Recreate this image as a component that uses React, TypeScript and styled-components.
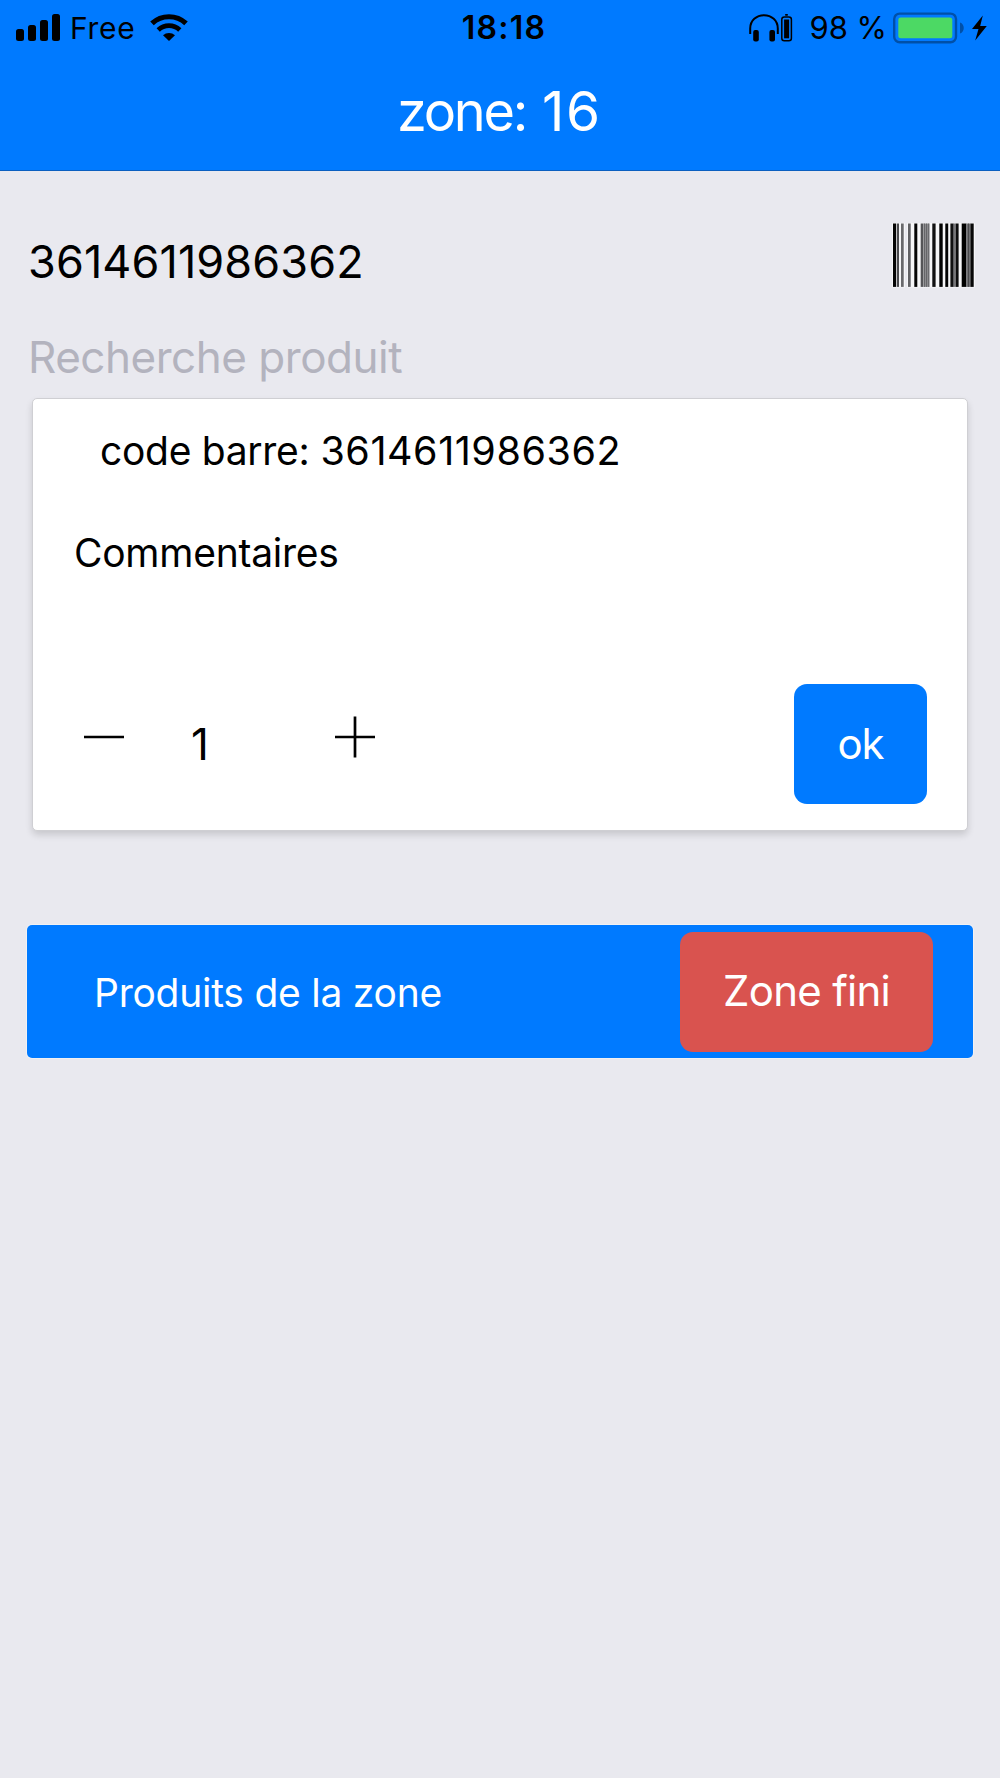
import React from "react";
import styled, { createGlobalStyle } from "styled-components";

const GlobalStyle = createGlobalStyle`
  *, *::before, *::after { box-sizing: border-box; }
  body {
    margin: 0;
    background: #e9e9ef;
    font-family: Inter, "Liberation Sans", sans-serif;
    color: #000;
  }
`;

const Screen = styled.div`
  width: 1000px;
  height: 1778px;
  display: flex;
  flex-direction: column;
  background: #e9e9ef;
  overflow: hidden;
`;

const Header = styled.header`
  height: 171px;
  background: #007aff;
  border-bottom: 1px solid #0b5fc0;
`;

const StatusBar = styled.div`
  display: grid;
  grid-template-columns: 1fr auto 1fr;
  height: 55px;
  padding: 0 12px 0 16px;
`;

const StatusGroup = styled.div<{ $end?: boolean }>`
  display: flex;
  align-items: center;
  justify-content: ${(p) => (p.$end ? "flex-end" : "flex-start")};
`;

const Text = styled.span<{
  $size: number;
  $track?: number;
  $weight?: number;
  $color?: string;
}>`
  font-size: ${(p) => p.$size}px;
  font-weight: ${(p) => p.$weight ?? 400};
  letter-spacing: ${(p) => p.$track ?? 0}px;
  color: ${(p) => p.$color ?? "#000"};
  line-height: 1.2;
  white-space: pre;
`;

const CarrierName = styled(Text)`
  margin: 0 15px 0 9px;
`;

const Clock = styled(Text)`
  padding: 2px 0 0 4px;
`;

const Percent = styled(Text)`
  margin: 0 6px 0 16px;
`;

const Title = styled.h1`
  margin: 0;
  height: 114px;
  display: flex;
  align-items: baseline;
  gap: 16px;
  justify-content: center;
  padding: 23px 1px 0 0;
  font-weight: 400;
`;

const Content = styled.main`
  display: flex;
  flex-direction: column;
  padding: 48px 27px 0 27px;
`;

const CodeRow = styled.div`
  height: 85px;
  padding-left: 1px;
  display: flex;
  align-items: center;
  justify-content: space-between;
`;

const BarcodeButton = styled.div`
  height: 72px;
  align-self: flex-start;
  display: flex;
  align-items: center;
  margin-right: -2px;
`;

const SearchField = styled.div`
  height: 54px;
  margin-top: 26px;
  padding-left: 1px;
  display: flex;
  align-items: center;
`;

const Card = styled.section`
  height: 433px;
  margin: 14px 5px 0 5px;
  padding: 29px 40px 0 41px;
  display: flex;
  flex-direction: column;
  background: #fff;
  border: 1px solid #cfcfd3;
  border-radius: 5px;
  box-shadow: 0 4px 7px rgba(0, 0, 0, 0.14);
`;

const CardLine = styled.div<{ $indent?: number; $gap?: number }>`
  height: 48px;
  margin-top: ${(p) => p.$gap ?? 0}px;
  padding-left: ${(p) => p.$indent ?? 0}px;
  display: flex;
  align-items: baseline;
  gap: 11px;
`;

const QuantityRow = styled.div`
  height: 121px;
  margin-top: 106px;
  display: flex;
  justify-content: space-between;
`;

const Stepper = styled.div`
  display: flex;
  height: 105px;
  align-items: center;
  padding-left: 10px;
`;

const Quantity = styled(Text)`
  width: 211px;
  padding: 16px 0 0 67px;
`;

const Button = styled.button<{ $width: number; $bg: string }>`
  width: ${(p) => p.$width}px;
  height: 120px;
  padding: 0;
  border: 0;
  border-radius: 13px;
  display: flex;
  align-items: center;
  justify-content: center;
  font-family: inherit;
  background: ${(p) => p.$bg};
`;

const ZoneBar = styled.section`
  height: 133px;
  margin-top: 94px;
  padding: 0 40px 0 67px;
  display: flex;
  align-items: center;
  justify-content: space-between;
  background: #007aff;
  border-radius: 5px;
  box-shadow: 0 0 0 1px #f1f1f3;
`;

const ZoneLabel = styled(Text)`
  padding-top: 3px;
`;

const SignalIcon = () => (
  <svg width="45" height="30" viewBox="0 0 45 30">
    <rect x="0" y="16" width="8" height="12" rx="2.5" />
    <rect x="12" y="12" width="8" height="16" rx="2.5" />
    <rect x="24" y="7" width="8" height="21" rx="2.5" />
    <rect x="36" y="1" width="8" height="27" rx="2.5" />
  </svg>
);

const WifiIcon = () => (
  <svg width="38" height="28" viewBox="0 0 38 28" fill="none" stroke="#000">
    <path d="M2 9.4 A25 25 0 0 1 36 9.4" strokeWidth="5.2" />
    <path d="M8.2 15.9 A16 16 0 0 1 29.8 15.9" strokeWidth="4.8" />
    <path d="M13 21.2 A9 9 0 0 1 25 21.2 L19 27 Z" fill="#000" stroke="none" />
  </svg>
);

const HeadphonesIcon = () => (
  <svg width="44" height="28" viewBox="0 0 44 28">
    <path
      d="M1.2 20 V14.5 C1.2 6.5 7.5 1.2 15 1.2 C22.5 1.2 28.8 6.5 28.8 14.5 V20"
      fill="none"
      stroke="#000"
      strokeWidth="2"
    />
    <rect x="4.2" y="16" width="5.6" height="11.5" rx="2" />
    <rect x="20.4" y="16" width="5.6" height="11.5" rx="2" />
    <rect x="36" y="0" width="3" height="1.8" rx="0.8" />
    <rect x="32.8" y="3" width="9.6" height="23.8" rx="2.5" fill="none" stroke="#000" strokeWidth="1.5" />
    <rect x="35.1" y="5.5" width="5" height="18.8" />
  </svg>
);

const BatteryIcon = () => (
  <svg width="78" height="32" viewBox="0 0 78 32">
    <rect x="1.2" y="1.6" width="61.8" height="28.6" rx="5.5" fill="none" stroke="#0050a8" strokeWidth="2.4" />
    <rect x="5.3" y="5.6" width="54" height="20.6" rx="2.5" fill="#4cd964" />
    <path d="M67 10.5 C72 12 72 20 67 21.5 Z" fill="#0050a8" />
  </svg>
);

const BoltIcon = () => (
  <svg width="17" height="26" viewBox="0 0 17 26">
    <path d="M11.8 0.5 L1 14 H7.5 L4.2 25.5 L15.8 11 H9.2 Z" />
  </svg>
);

const bars: [number, number, string][] = [
  [0, 3, "#050505"],
  [3.7, 2.3, "#4a4a4d"],
  [8, 2.7, "#69696c"],
  [15, 2.7, "#626265"],
  [21.3, 3, "#050505"],
  [27.7, 2.7, "#555558"],
  [30.4, 5.9, "#8b8b8e"],
  [31, 0.7, "#555558"],
  [33.3, 0.7, "#555558"],
  [35.3, 1, "#5e5e61"],
  [39.3, 3.3, "#111112"],
  [46.3, 3.4, "#030303"],
  [52.3, 2.9, "#030303"],
  [57.4, 3.3, "#111112"],
  [60.7, 2, "#77777a"],
  [62.7, 2.9, "#0c0c0d"],
  [68.7, 4.7, "#000000"],
  [73.4, 4, "#707073"],
  [75, 0.7, "#39393b"],
  [77.4, 3.3, "#080808"],
];

const BarcodeIcon = () => (
  <svg width="84" height="66" viewBox="-2 -1.5 84 66">
    <g fill="#f6f6f8">
      <rect x="-1" y="-0.5" width="13" height="64.5" />
      <rect x="14" y="-0.5" width="68" height="64.5" />
    </g>
    {bars.map(([x, w, c]) => (
      <rect key={x} x={x} y="0" width={w} height="63.4" fill={c} />
    ))}
  </svg>
);

const StepIcon = ({ plus }: { plus?: boolean }) => (
  <svg width="40" height="42" viewBox="0 0 40 42" stroke="#000" strokeWidth="2.7">
    <path d={plus ? "M0 21 H40 M20 0.5 V41.5" : "M0 21 H40"} fill="none" />
  </svg>
);

export default function App() {
  return (
    <Screen>
      <GlobalStyle />
      <Header>
        <StatusBar>
          <StatusGroup>
            <SignalIcon />
            <CarrierName $size={30} $track={0.7}>Free</CarrierName>
            <WifiIcon />
          </StatusGroup>
          <StatusGroup>
            <Clock $size={32} $weight={600} $track={1.3}>18:18</Clock>
          </StatusGroup>
          <StatusGroup $end>
            <HeadphonesIcon />
            <Percent $size={31}>98 %</Percent>
            <BatteryIcon />
            <BoltIcon />
          </StatusGroup>
        </StatusBar>
        <Title>
          <Text $size={54} $track={-2.3} $color="#fff">zone:</Text>
          <Text $size={55} $track={1.8} $color="#fff">16</Text>
        </Title>
      </Header>
      <Content>
        <CodeRow>
          <Text $size={45} $track={0.1}>3614611986362</Text>
          <BarcodeButton>
            <BarcodeIcon />
          </BarcodeButton>
        </CodeRow>
        <SearchField>
          <Text $size={44} $track={-0.48} $color="#b3b3be">Recherche produit</Text>
        </SearchField>
        <Card>
          <CardLine $indent={26}>
            <Text $size={39} $track={-0.3}>code barre:</Text>
            <Text $size={39.5} $track={0.55}>3614611986362</Text>
          </CardLine>
          <CardLine $gap={54}>
            <Text $size={39} $track={-0.25}>Commentaires</Text>
          </CardLine>
          <QuantityRow>
            <Stepper>
              <StepIcon />
              <Quantity $size={44}>1</Quantity>
              <StepIcon plus />
            </Stepper>
            <Button $width={133} $bg="#007aff">
              <Text $size={42} $track={-1} $color="#fff">ok</Text>
            </Button>
          </QuantityRow>
        </Card>
        <ZoneBar>
          <ZoneLabel $size={39} $track={-0.25} $color="#fff">Produits de la zone</ZoneLabel>
          <Button $width={253} $bg="#d9534f">
            <Text $size={42} $track={-0.7} $color="#fff">Zone fini</Text>
          </Button>
        </ZoneBar>
      </Content>
    </Screen>
  );
}
